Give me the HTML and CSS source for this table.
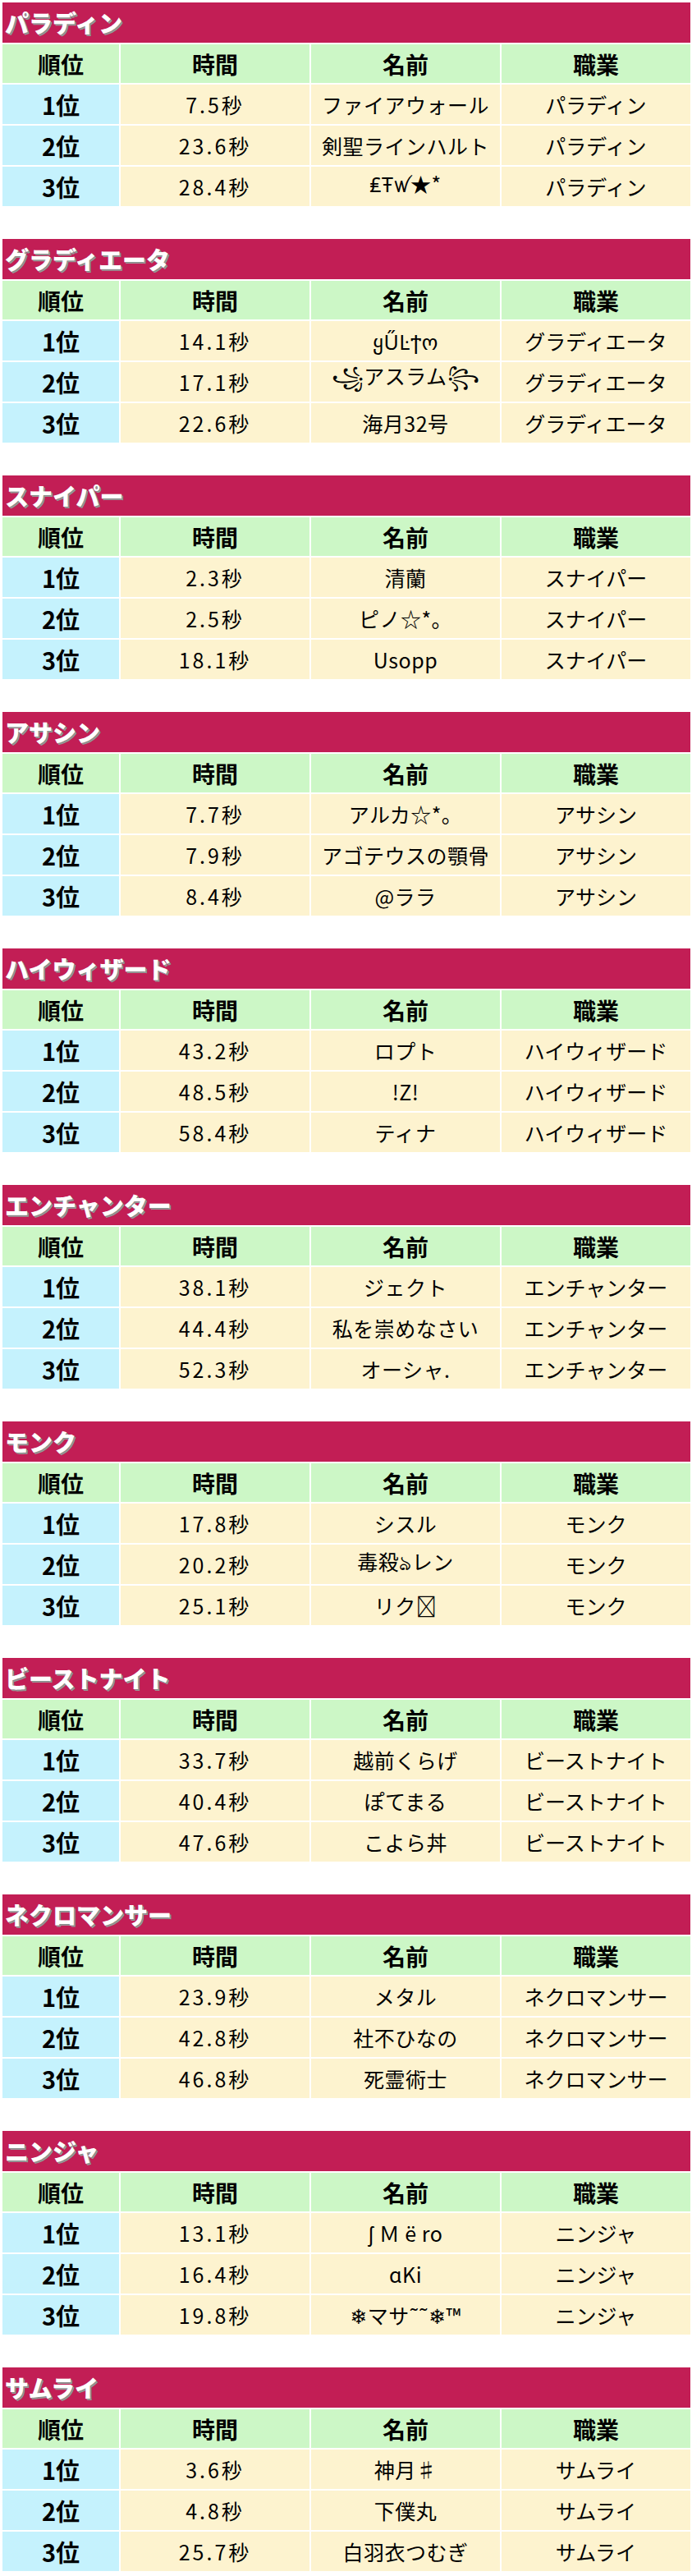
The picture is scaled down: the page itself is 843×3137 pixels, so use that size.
FILE: index.html
```html
<!DOCTYPE html>
<html lang="ja">
<head>
<meta charset="utf-8">
<title>ランキング</title>
<link rel="stylesheet" href="styles.css">
</head>
<body>
<main class="page">

<section class="sec">
  <h2 class="title">パラディン</h2>
  <div class="grid">
    <div class="hd">順位</div><div class="hd">時間</div><div class="hd">名前</div><div class="hd">職業</div>
    <div class="rk">1位</div><div class="cl tm">7.5秒</div><div class="cl nm">ファイアウォール</div><div class="cl">パラディン</div>
    <div class="rk">2位</div><div class="cl tm">23.6秒</div><div class="cl nm">剣聖ラインハルト</div><div class="cl">パラディン</div>
    <div class="rk">3位</div><div class="cl tm">28.4秒</div><div class="cl nm">₤Ŧꪝ★*</div><div class="cl">パラディン</div>
  </div>
</section>

<section class="sec">
  <h2 class="title">グラディエータ</h2>
  <div class="grid">
    <div class="hd">順位</div><div class="hd">時間</div><div class="hd">名前</div><div class="hd">職業</div>
    <div class="rk">1位</div><div class="cl tm">14.1秒</div><div class="cl nm">ყŰĿϯო</div><div class="cl">グラディエータ</div>
    <div class="rk">2位</div><div class="cl tm">17.1秒</div><div class="cl nm">꧁アスラム꧂</div><div class="cl">グラディエータ</div>
    <div class="rk">3位</div><div class="cl tm">22.6秒</div><div class="cl nm">海月32号</div><div class="cl">グラディエータ</div>
  </div>
</section>

<section class="sec">
  <h2 class="title">スナイパー</h2>
  <div class="grid">
    <div class="hd">順位</div><div class="hd">時間</div><div class="hd">名前</div><div class="hd">職業</div>
    <div class="rk">1位</div><div class="cl tm">2.3秒</div><div class="cl nm">清蘭</div><div class="cl">スナイパー</div>
    <div class="rk">2位</div><div class="cl tm">2.5秒</div><div class="cl nm">ピノ☆*。</div><div class="cl">スナイパー</div>
    <div class="rk">3位</div><div class="cl tm">18.1秒</div><div class="cl nm">Usopp</div><div class="cl">スナイパー</div>
  </div>
</section>

<section class="sec">
  <h2 class="title">アサシン</h2>
  <div class="grid">
    <div class="hd">順位</div><div class="hd">時間</div><div class="hd">名前</div><div class="hd">職業</div>
    <div class="rk">1位</div><div class="cl tm">7.7秒</div><div class="cl nm">アルカ☆*。</div><div class="cl">アサシン</div>
    <div class="rk">2位</div><div class="cl tm">7.9秒</div><div class="cl nm">アゴテウスの顎骨</div><div class="cl">アサシン</div>
    <div class="rk">3位</div><div class="cl tm">8.4秒</div><div class="cl nm">@ララ</div><div class="cl">アサシン</div>
  </div>
</section>

<section class="sec">
  <h2 class="title">ハイウィザード</h2>
  <div class="grid">
    <div class="hd">順位</div><div class="hd">時間</div><div class="hd">名前</div><div class="hd">職業</div>
    <div class="rk">1位</div><div class="cl tm">43.2秒</div><div class="cl nm">ロプト</div><div class="cl">ハイウィザード</div>
    <div class="rk">2位</div><div class="cl tm">48.5秒</div><div class="cl nm">!Z!</div><div class="cl">ハイウィザード</div>
    <div class="rk">3位</div><div class="cl tm">58.4秒</div><div class="cl nm">ティナ</div><div class="cl">ハイウィザード</div>
  </div>
</section>

<section class="sec">
  <h2 class="title">エンチャンター</h2>
  <div class="grid">
    <div class="hd">順位</div><div class="hd">時間</div><div class="hd">名前</div><div class="hd">職業</div>
    <div class="rk">1位</div><div class="cl tm">38.1秒</div><div class="cl nm">ジェクト</div><div class="cl">エンチャンター</div>
    <div class="rk">2位</div><div class="cl tm">44.4秒</div><div class="cl nm">私を崇めなさい</div><div class="cl">エンチャンター</div>
    <div class="rk">3位</div><div class="cl tm">52.3秒</div><div class="cl nm">オーシャ.</div><div class="cl">エンチャンター</div>
  </div>
</section>

<section class="sec">
  <h2 class="title">モンク</h2>
  <div class="grid">
    <div class="hd">順位</div><div class="hd">時間</div><div class="hd">名前</div><div class="hd">職業</div>
    <div class="rk">1位</div><div class="cl tm">17.8秒</div><div class="cl nm">シスル</div><div class="cl">モンク</div>
    <div class="rk">2位</div><div class="cl tm">20.2秒</div><div class="cl nm">毒殺ঌレン</div><div class="cl">モンク</div>
    <div class="rk">3位</div><div class="cl tm">25.1秒</div><div class="cl nm">リク&#xE741;</div><div class="cl">モンク</div>
  </div>
</section>

<section class="sec">
  <h2 class="title">ビーストナイト</h2>
  <div class="grid">
    <div class="hd">順位</div><div class="hd">時間</div><div class="hd">名前</div><div class="hd">職業</div>
    <div class="rk">1位</div><div class="cl tm">33.7秒</div><div class="cl nm">越前くらげ</div><div class="cl">ビーストナイト</div>
    <div class="rk">2位</div><div class="cl tm">40.4秒</div><div class="cl nm">ぽてまる</div><div class="cl">ビーストナイト</div>
    <div class="rk">3位</div><div class="cl tm">47.6秒</div><div class="cl nm">こよら丼</div><div class="cl">ビーストナイト</div>
  </div>
</section>

<section class="sec">
  <h2 class="title">ネクロマンサー</h2>
  <div class="grid">
    <div class="hd">順位</div><div class="hd">時間</div><div class="hd">名前</div><div class="hd">職業</div>
    <div class="rk">1位</div><div class="cl tm">23.9秒</div><div class="cl nm">メタル</div><div class="cl">ネクロマンサー</div>
    <div class="rk">2位</div><div class="cl tm">42.8秒</div><div class="cl nm">社不ひなの</div><div class="cl">ネクロマンサー</div>
    <div class="rk">3位</div><div class="cl tm">46.8秒</div><div class="cl nm">死霊術士</div><div class="cl">ネクロマンサー</div>
  </div>
</section>

<section class="sec">
  <h2 class="title">ニンジャ</h2>
  <div class="grid">
    <div class="hd">順位</div><div class="hd">時間</div><div class="hd">名前</div><div class="hd">職業</div>
    <div class="rk">1位</div><div class="cl tm">13.1秒</div><div class="cl nm">ʃ Ｍ ë ro</div><div class="cl">ニンジャ</div>
    <div class="rk">2位</div><div class="cl tm">16.4秒</div><div class="cl nm">ɑKi</div><div class="cl">ニンジャ</div>
    <div class="rk">3位</div><div class="cl tm">19.8秒</div><div class="cl nm">❄マサ˜˜❄™</div><div class="cl">ニンジャ</div>
  </div>
</section>

<section class="sec">
  <h2 class="title">サムライ</h2>
  <div class="grid">
    <div class="hd">順位</div><div class="hd">時間</div><div class="hd">名前</div><div class="hd">職業</div>
    <div class="rk">1位</div><div class="cl tm">3.6秒</div><div class="cl nm">神月♯</div><div class="cl">サムライ</div>
    <div class="rk">2位</div><div class="cl tm">4.8秒</div><div class="cl nm">下僕丸</div><div class="cl">サムライ</div>
    <div class="rk">3位</div><div class="cl tm">25.7秒</div><div class="cl nm">白羽衣つむぎ</div><div class="cl">サムライ</div>
  </div>
</section>

</main>
</body>
</html>
```
FILE: styles.css
```css
html, body {
  margin: 0;
  padding: 0;
  background: #ffffff;
}

body {
  font-family: "Noto Sans CJK JP", "Noto Sans", "DejaVu Sans", sans-serif;
  color: #000000;
}

.page {
  padding: 3px 2px 0 3px;
  width: 838px;
}

.sec {
  margin: 0 0 40px 0;
}

.title {
  margin: 0 0 2px 0;
  height: 49px;
  background: #c21e55;
  color: #ffffff;
  font-size: 29px;
  font-weight: 900;
  line-height: 49px;
  padding: 0 0 0 3px;
  letter-spacing: 0;
  text-shadow: 1px 1px 0 #8a8a8a, 2px 2px 0 #9a9a9a;
}

.grid {
  display: grid;
  grid-template-columns: 142px 230px 230px 230px;
  grid-template-rows: 47px 48px 48px 48px;
  gap: 2px;
}

.hd, .rk, .cl {
  display: flex;
  align-items: center;
  justify-content: center;
  white-space: nowrap;
}

.hd {
  background: #ccf7c6;
  font-size: 28px;
  font-weight: 700;
}

.rk {
  background: #c5f2fd;
  font-size: 29px;
  font-weight: 700;
}

.cl {
  background: #fdf3cf;
  font-size: 25px;
  font-weight: 400;
}

.tm {
  letter-spacing: 3px;
}

.nm {
  letter-spacing: 0.5px;
}
```
